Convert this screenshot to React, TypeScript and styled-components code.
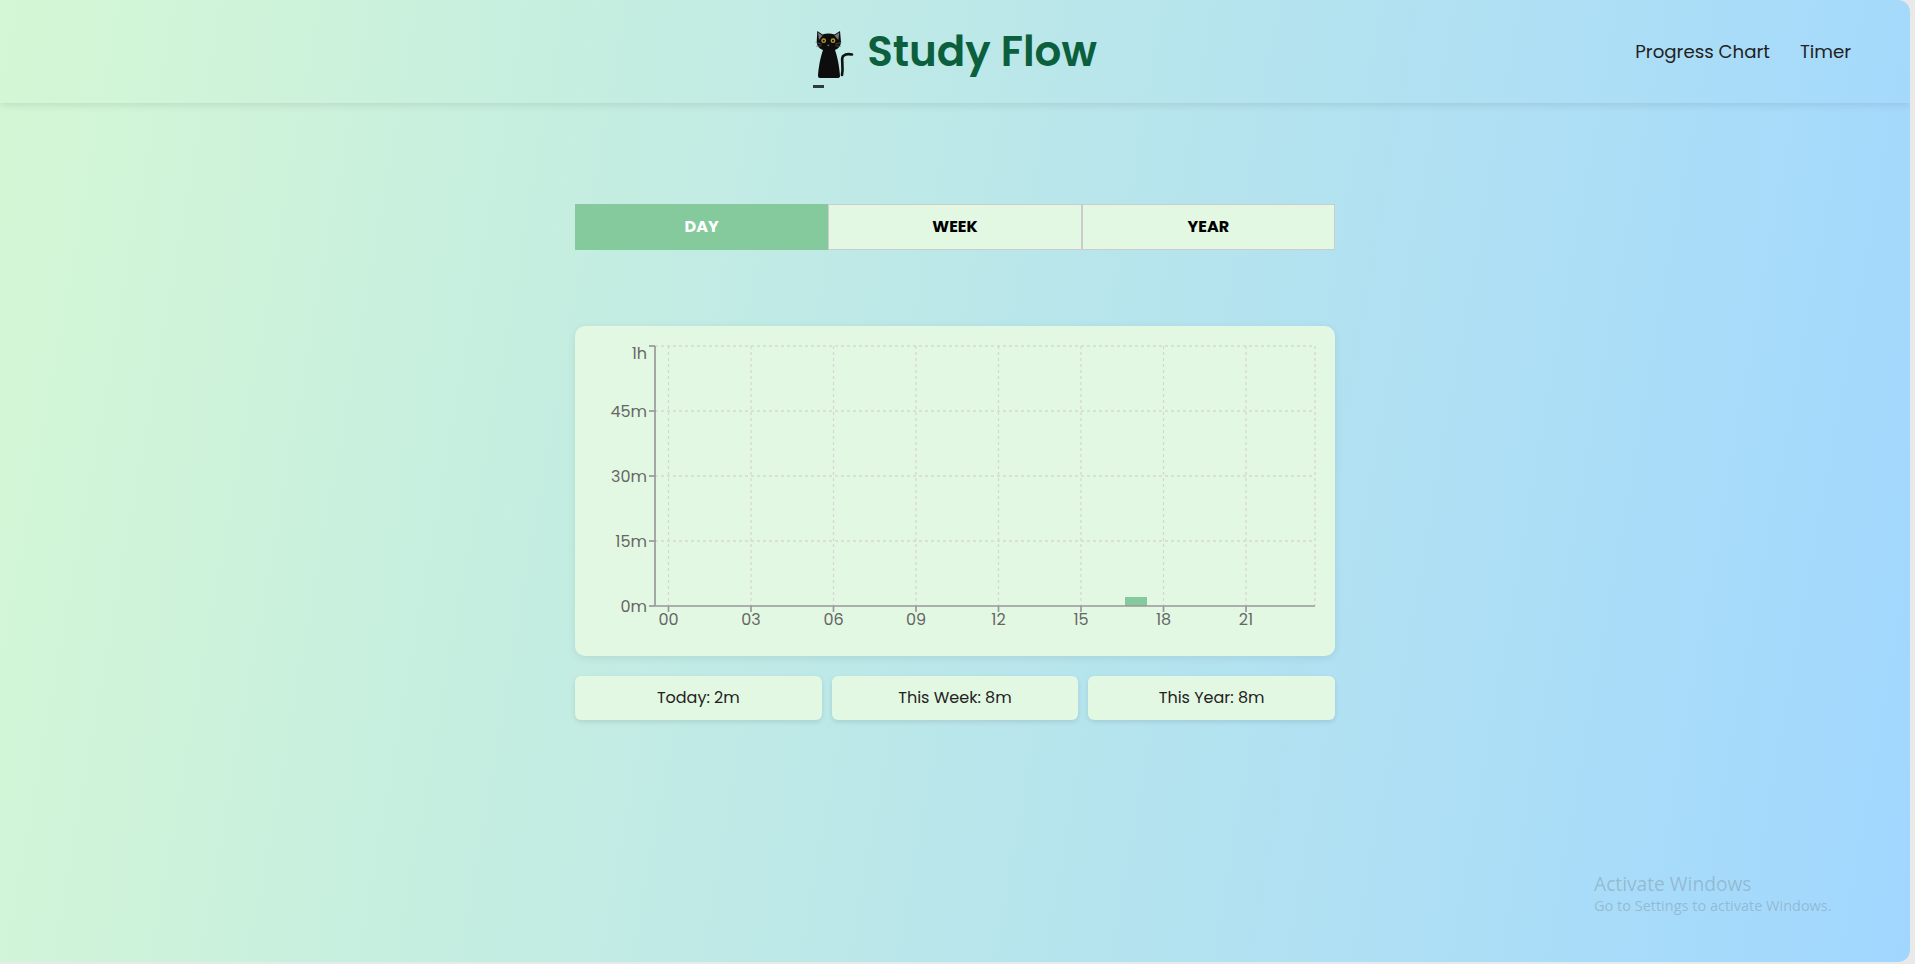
import React from 'react'
import styled, { createGlobalStyle } from 'styled-components'

const GlobalStyle = createGlobalStyle`
  html, body {
    margin: 0;
    padding: 0;
    background: #e9e9e9;
  }

  body {
    font-family: 'Poppins', 'Inter', 'Liberation Sans', sans-serif;
  }
`

const Page = styled.div`
  background: linear-gradient(100deg, #d4f7d4 0%, #a1d7ff 100%);
  border-radius: 0 12px 12px 0;
  display: flex;
  flex-direction: column;
  height: 962px;
  overflow: hidden;
  position: relative;
  width: 1910px;
`

const Header = styled.header`
  align-items: center;
  box-shadow: 0 2px 8px rgba(0, 0, 0, 0.1);
  display: grid;
  flex-shrink: 0;
  grid-template-columns: 1fr auto 1fr;
  height: 103px;
  padding: 0 59px;
`

const Brand = styled.div`
  align-items: center;
  display: flex;
  gap: 12px;
  grid-column: 2;
`

const BrandTitle = styled.h1`
  color: #0b5f3d;
  font-size: 42px;
  font-weight: 600;
  margin: 0;
`

const Nav = styled.nav`
  display: flex;
  gap: 30px;
  justify-content: flex-end;
`

const NavLink = styled.a`
  color: #222;
  font-size: 18.2px;
`

const Main = styled.main`
  display: flex;
  flex-direction: column;
  margin: 0 auto;
  padding-top: 101px;
  width: 760px;
`

const Tabs = styled.div`
  display: grid;
  grid-template-columns: repeat(3, 1fr);
  height: 46px;
`

const Tab = styled.button<{ $active?: boolean }>`
  background: ${({ $active }) => ($active ? '#84ca9c' : '#e3f8e3')};
  border: ${({ $active }) => ($active ? 'none' : '1px solid #ccc')};
  color: ${({ $active }) => ($active ? '#fff' : '#000')};
  font-family: inherit;
  font-size: 16px;
  font-weight: 700;
  padding: 0 0 2px;
`

const ChartCard = styled.section`
  background: #e3f8e3;
  border-radius: 10px;
  box-shadow: 0 2px 8px rgba(0, 0, 0, 0.08);
  height: 330px;
  margin-top: 76px;
`

const Stats = styled.div`
  display: grid;
  gap: 10px;
  grid-template-columns: repeat(3, 1fr);
  margin-top: 20px;
`

const Stat = styled.div`
  align-items: center;
  background: #e3f8e3;
  border-radius: 6px;
  box-shadow: 0 2px 5px rgba(0, 0, 0, 0.1);
  box-sizing: border-box;
  color: #222;
  display: flex;
  font-size: 16px;
  height: 44px;
  justify-content: center;
  padding-bottom: 2px;
`

const Watermark = styled.div`
  bottom: 47px;
  color: rgba(90, 90, 90, 0.27);
  font-family: 'Open Sans', sans-serif;
  left: 1594px;
  position: absolute;
  white-space: nowrap;
`

const WatermarkTitle = styled.div`
  font-size: 19.2px;
  line-height: 25px;
`

const WatermarkText = styled.div`
  font-size: 14.5px;
  line-height: 19px;
`

const AxisLabel = styled.text`
  fill: #666;
  font-family: 'Poppins', 'Inter', 'Liberation Sans', sans-serif;
  font-size: 16px;
`

const yTicks = [
  { label: '1h', y: 20, labelY: 33 },
  { label: '45m', y: 85, labelY: 91 },
  { label: '30m', y: 150, labelY: 156 },
  { label: '15m', y: 215, labelY: 221 },
  { label: '0m', y: 280, labelY: 286 },
]

const gridX = [93.5, 176, 258.5, 341, 423.5, 506, 588.5, 671, 740]
const hourLabels = ['00', '03', '06', '09', '12', '15', '18', '21']

function CatIcon() {
  return (
    <svg width="42" height="73" viewBox="0 0 42 73" aria-hidden="true">
      <path
        d="M4.3 16L9.5 19.5Q15.5 17.5 21.5 19.5L27 16L28 27Q27.5 33 22 35C24.5 42 26.5 52 27 61Q27 63 24 63H7Q5 63 5 61C5.5 52 7.5 42 10 35Q4 33 3.7 27Z"
        fill="#0d0d0d"
      />
      <path d="M5 17.5L9.5 20.5 6 25zM26.3 17.5L21.5 20.5 25.3 25z" fill="#7a7a7a" />
      <circle cx="10.7" cy="25.7" r="2.4" fill="#b8922a" />
      <circle cx="20" cy="25.7" r="2.4" fill="#b8922a" />
      <circle cx="10.7" cy="25.7" r="1" fill="#111" />
      <circle cx="20" cy="25.7" r="1" fill="#111" />
      <path d="M13.8 29.8h3l-1.5 1.8z" fill="#6d6d6d" />
      <path
        d="M2.5 27.5l6 1.5M3 31.5l5.5-.8M28.5 27.5l-6 1.5M28 31.5l-5.5-.8"
        fill="none"
        stroke="#777"
        strokeWidth="0.6"
      />
      <path
        d="M29 60C31 50 27 42 31 40.5 33 38.5 36 39 39 39.5"
        fill="none"
        stroke="#111"
        strokeWidth="2.6"
        strokeLinecap="round"
      />
      <rect x="0" y="70" width="11" height="3" fill="#2f3a3d" />
    </svg>
  )
}

function Chart() {
  return (
    <svg width="760" height="330" viewBox="0 0 760 330" aria-hidden="true">
      <g stroke="#d6d6d6" strokeWidth="1.3" strokeDasharray="3 3" fill="none">
        {gridX.map(x => (
          <line key={x} x1={x} x2={x} y1={20} y2={280} />
        ))}
        {yTicks.slice(0, 4).map(t => (
          <line key={t.y} x1={80} x2={740} y1={t.y} y2={t.y} />
        ))}
      </g>
      <rect x="550" y="271" width="22" height="9" fill="#84ca9c" />
      <g stroke="#999" strokeWidth="1.7" fill="none">
        <line x1={80} x2={80} y1={20} y2={280} />
        <line x1={80} x2={740} y1={280} y2={280} />
        {yTicks.map(t => (
          <line key={t.y} x1={74} x2={80} y1={t.y} y2={t.y} />
        ))}
        {hourLabels.map((_, i) => (
          <line key={i} x1={gridX[i]} x2={gridX[i]} y1={280} y2={286} />
        ))}
      </g>
      {yTicks.map(t => (
        <AxisLabel key={t.label} x={72} y={t.labelY} textAnchor="end">
          {t.label}
        </AxisLabel>
      ))}
      {hourLabels.map((h, i) => (
        <AxisLabel key={h} x={gridX[i]} y={299} textAnchor="middle">
          {h}
        </AxisLabel>
      ))}
    </svg>
  )
}

export default function App() {
  return (
    <>
      <GlobalStyle />
      <Page>
        <Header>
          <Brand>
            <CatIcon />
            <BrandTitle>Study Flow</BrandTitle>
          </Brand>
          <Nav>
            <NavLink>Progress Chart</NavLink>
            <NavLink>Timer</NavLink>
          </Nav>
        </Header>
        <Main>
          <Tabs>
            <Tab $active>DAY</Tab>
            <Tab>WEEK</Tab>
            <Tab>YEAR</Tab>
          </Tabs>
          <ChartCard>
            <Chart />
          </ChartCard>
          <Stats>
            <Stat>Today: 2m</Stat>
            <Stat>This Week: 8m</Stat>
            <Stat>This Year: 8m</Stat>
          </Stats>
        </Main>
        <Watermark>
          <WatermarkTitle>Activate Windows</WatermarkTitle>
          <WatermarkText>Go to Settings to activate Windows.</WatermarkText>
        </Watermark>
      </Page>
    </>
  )
}
